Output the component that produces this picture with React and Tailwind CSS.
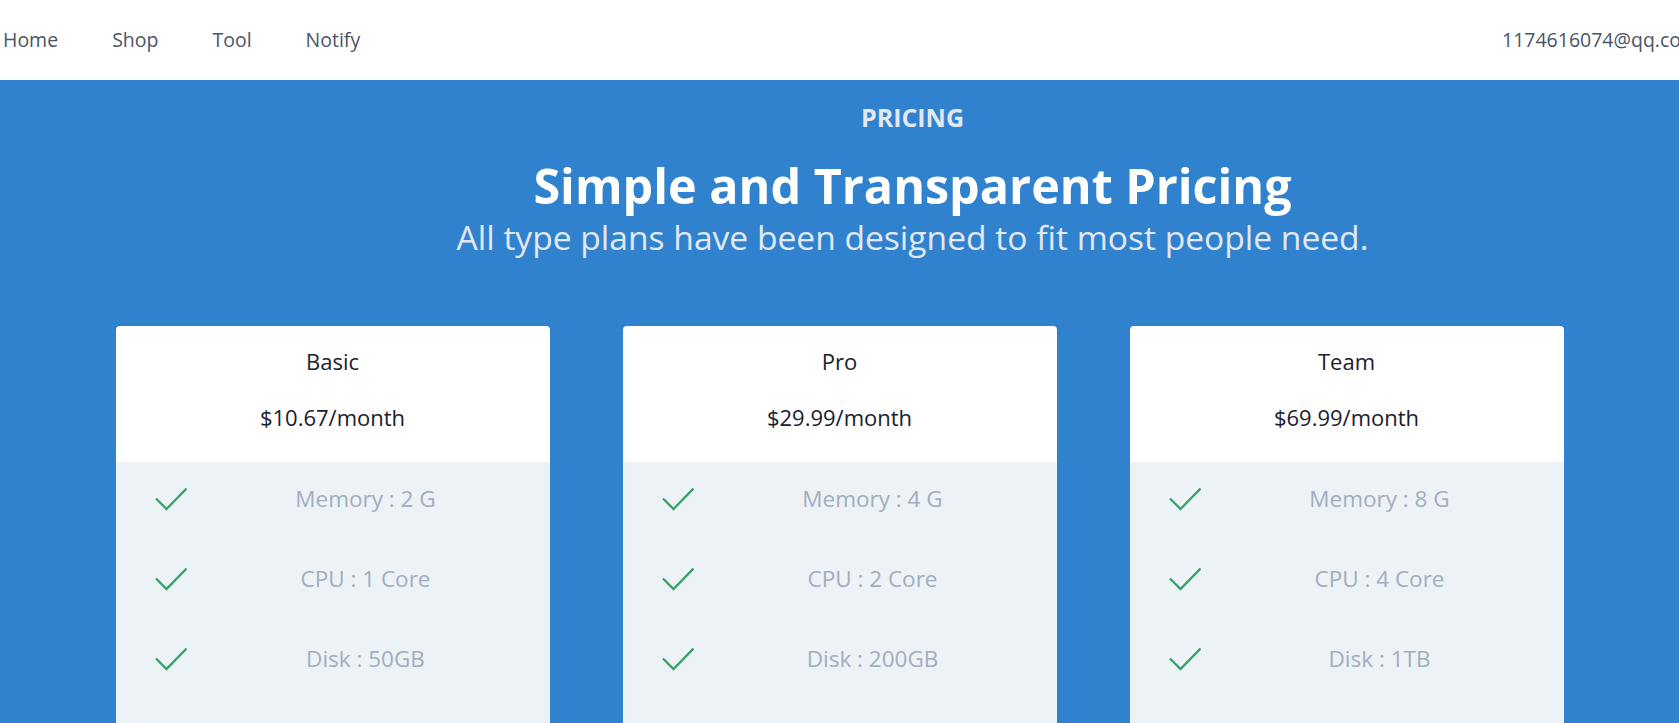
import React from "react";

const plans = [
  { name: "Basic", price: "$10.67/month", memory: "2 G", cpu: "1 Core", disk: "50GB" },
  { name: "Pro", price: "$29.99/month", memory: "4 G", cpu: "2 Core", disk: "200GB" },
  { name: "Team", price: "$69.99/month", memory: "8 G", cpu: "4 Core", disk: "1TB" },
];

function Check() {
  return (
    <svg className="w-[32px] h-[24px] shrink-0" viewBox="0 0 32 24" fill="none">
      <path d="M1 11.5L11.5 22L31.5 1.5" stroke="#38a169" strokeWidth="2.3" />
    </svg>
  );
}

function Feature({ text }) {
  return (
    <div className="flex items-center h-[80px] pb-[6px] pl-[39px] pr-[5px]">
      <Check />
      <span className="flex-1 text-center text-[22.5px] text-[#a0aec0]">{text}</span>
    </div>
  );
}

function PlanCard({ plan }) {
  return (
    <div className="w-[434px] shrink-0 rounded bg-white overflow-hidden">
      <div className="h-[136px] flex flex-col items-center text-[#1a202c]">
        <div className="mt-[20px] text-[22px] leading-[30px]">{plan.name}</div>
        <div className="mt-[26px] text-[22px] leading-[30px]">{plan.price}</div>
      </div>
      <div className="bg-[#edf2f7] pb-[40px]">
        <Feature text={`Memory : ${plan.memory}`} />
        <Feature text={`CPU : ${plan.cpu}`} />
        <Feature text={`Disk : ${plan.disk}`} />
      </div>
    </div>
  );
}

export default function App() {
  return (
    <div className="min-h-screen bg-[#3182ce] font-['Open_Sans',sans-serif]">
      {/* Top nav */}
      <header className="h-[80px] bg-white flex items-center overflow-hidden text-[19.5px] text-[#4a5568]">
        <nav className="w-[1502px] shrink-0 flex items-center gap-[54px] pl-[3px]">
          <a href="#">Home</a>
          <a href="#">Shop</a>
          <a href="#">Tool</a>
          <a href="#">Notify</a>
        </nav>
        <span className="shrink-0 whitespace-nowrap">1174616074@qq.com</span>
      </header>

      {/* Pricing heading */}
      <section className="pl-[146px] pt-[21px] text-center">
        <p className="text-[25px] leading-[32px] font-bold text-[#e2e8f0]">PRICING</p>
        <h1 className="mt-[24px] text-[48.5px] leading-[56px] font-bold text-white">
          Simple and Transparent Pricing
        </h1>
        <p className="mt-[2px] text-[33.6px] leading-[44px] text-[#e2e8f0]">
          All type plans have been designed to fit most people need.
        </p>
      </section>

      {/* Plans */}
      <div className="mt-[67px] flex justify-center gap-[73px]">
        {plans.map((p) => (
          <PlanCard key={p.name} plan={p} />
        ))}
      </div>
    </div>
  );
}
